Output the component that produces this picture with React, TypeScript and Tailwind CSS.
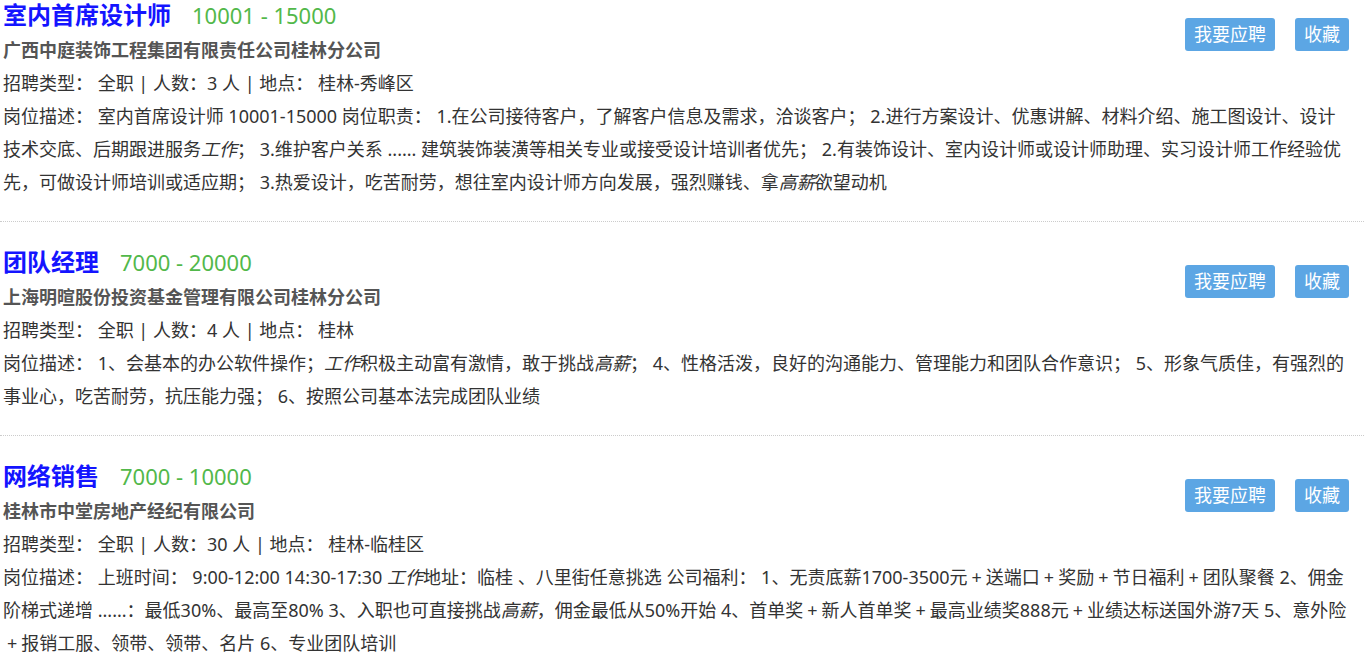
import { FC, ReactNode } from "react";

interface Job {
  title: string;
  salary: string;
  company: string;
  count: string;
  place: string;
  desc: ReactNode;
}

// the plus signs in the source sit wider than a plain "+"
const P = () => <span className="px-[4px]">+</span>;

const jobs: Job[] = [
  {
    title: "室内首席设计师",
    salary: "10001 - 15000",
    company: "广西中庭装饰工程集团有限责任公司桂林分公司",
    count: "3",
    place: "桂林-秀峰区",
    desc: (
      <>
        室内首席设计师 10001-15000 岗位职责： 1.在公司接待客户，了解客户信息及需求，洽谈客户； 2.进行方案设计、优惠讲解、材料介绍、施工图设计、设计技术交底、后期跟进服务<em>工作</em>； 3.维护客户关系 ...... 建筑装饰装潢等相关专业或接受设计培训者优先； 2.有装饰设计、室内设计师或设计师助理、实习设计师工作经验优先，可做设计师培训或适应期； 3.热爱设计，吃苦耐劳，想往室内设计师方向发展，强烈赚钱、拿<em>高薪</em>欲望动机
      </>
    ),
  },
  {
    title: "团队经理",
    salary: "7000 - 20000",
    company: "上海明暄股份投资基金管理有限公司桂林分公司",
    count: "4",
    place: "桂林",
    desc: (
      <>
        1、会基本的办公软件操作；<em>工作</em>积极主动富有激情，敢于挑战<em>高薪</em>； 4、性格活泼，良好的沟通能力、管理能力和团队合作意识； 5、形象气质佳，有强烈的事业心，吃苦耐劳，抗压能力强； 6、按照公司基本法完成团队业绩
      </>
    ),
  },
  {
    title: "网络销售",
    salary: "7000 - 10000",
    company: "桂林市中堂房地产经纪有限公司",
    count: "30",
    place: "桂林-临桂区",
    desc: (
      <>
        上班时间： 9:00-12:00 14:30-17:30 <em>工作</em>地址：临桂 、八里街任意挑选 公司福利： 1、无责底薪1700-3500元<P />送端口<P />奖励<P />节日福利<P />团队聚餐 2、佣金阶梯式递增 ......：最低30%、最高至80% 3、入职也可直接挑战<em>高薪</em>，佣金最低从50%开始 4、首单奖<P />新人首单奖<P />最高业绩奖888元<P />业绩达标送国外游7天 5、意外险<P />报销工服、领带、领带、名片 6、专业团队培训
      </>
    ),
  },
];

const JobItem: FC<{ job: Job; first: boolean }> = ({ job, first }) => {
  return (
    <div
      className={`pl-[3px] pr-[13px] pb-[22px] border-b border-dotted border-[#cccccc] ${
        first ? "pt-0" : "pt-[25px]"
      }`}
    >
      <div className="flex justify-between">
        <div>
          <div className="flex items-baseline h-[30px] leading-[30px] mb-[4px]">
            <span className="text-[24px] font-bold text-[#1414ff]">{job.title}</span>
            <span className="ml-[21px] text-[22px] text-[#52b84a]">{job.salary}</span>
          </div>
          <div className="text-[18px] leading-[33px] font-bold text-[#555555]">{job.company}</div>
        </div>
        <div className="flex gap-[20px] mt-[18px] mr-[2px] h-[33px]">
          <button className="px-[9px] h-[33px] leading-[33px] rounded-[3px] bg-[#5ca6e4] text-white text-[18px]">
            我要应聘
          </button>
          <button className="px-[9px] h-[33px] leading-[33px] rounded-[3px] bg-[#5ca6e4] text-white text-[18px]">
            收藏
          </button>
        </div>
      </div>
      <div className="text-[18px] leading-[33px] text-[#333333]">
        招聘类型： 全职 | 人数：{job.count} 人 | 地点： {job.place}
      </div>
      <div className="text-[18px] leading-[33px] text-[#333333]">岗位描述： {job.desc}</div>
    </div>
  );
};

export default function App() {
  return (
    <div
      className="w-[1364px] h-[657px] overflow-hidden bg-white"
      style={{ fontFamily: '"Noto Sans", "Noto Sans CJK SC", sans-serif' }}
    >
      {jobs.map((job, i) => (
        <JobItem key={job.title} job={job} first={i === 0} />
      ))}
    </div>
  );
}
